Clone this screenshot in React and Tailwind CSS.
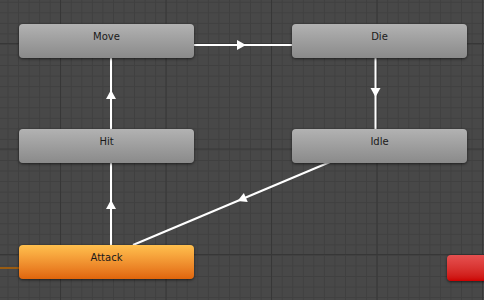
import React from 'react'

const nodes = [
  { name: 'Move', x: 19, y: 24, kind: 'gray' },
  { name: 'Die', x: 292, y: 24, kind: 'gray' },
  { name: 'Hit', x: 19, y: 129, kind: 'gray' },
  { name: 'Idle', x: 292, y: 129, kind: 'gray' },
  { name: 'Attack', x: 19, y: 245, kind: 'orange' },
]

const kindClass = {
  gray: 'bg-gradient-to-b from-[#b2b2b2] to-[#8a8a8a]',
  orange: 'bg-gradient-to-b from-[#ffc04e] to-[#e0650a]',
}

// triangle arrow head: tip point + direction
function Head({ tx, ty, dx, dy }) {
  const len = Math.hypot(dx, dy)
  const ux = dx / len
  const uy = dy / len
  const bx = tx - ux * 9
  const by = ty - uy * 9
  const px = -uy * 5
  const py = ux * 5
  return <polygon points={`${tx},${ty} ${bx + px},${by + py} ${bx - px},${by - py}`} fill="#ffffff" />
}

function Node({ name, x, y, kind }) {
  return (
    <div
      className={`absolute w-[175px] h-[34px] rounded-[4px] shadow-[0_1px_3px_rgba(0,0,0,0.6)] flex justify-center pt-[7px] ${kindClass[kind]}`}
      style={{ left: x, top: y }}
    >
      <span className="font-['DejaVu_Sans',sans-serif] text-[10px] leading-[12px] text-[#1a1a1a]">{name}</span>
    </div>
  )
}

export default function App() {
  return (
    <div className="relative w-[484px] h-[300px] overflow-hidden bg-[#484848] bg-[linear-gradient(90deg,#373737_1px,transparent_1px),linear-gradient(#373737_1px,transparent_1px),linear-gradient(90deg,#404040_1px,transparent_1px),linear-gradient(#404040_1px,transparent_1px)] bg-[size:105.5px_105.5px,105.5px_105.5px,10.55px_10.55px,10.55px_10.55px] bg-[position:60px_43px,60px_43px,7.5px_1.8px,7.5px_1.8px]">
      {/* transitions */}
      <svg className="absolute inset-0" width="484" height="300">
        <line x1="0" y1="268" x2="19" y2="268" stroke="#9a5c12" strokeWidth="2" />
        <line x1="193" y1="45" x2="292" y2="45" stroke="#fff" strokeWidth="2" />
        <Head tx={246} ty={45} dx={1} dy={0} />
        <line x1="375.5" y1="57" x2="375.5" y2="129" stroke="#fff" strokeWidth="2" />
        <Head tx={375.5} ty={97} dx={0} dy={1} />
        <line x1="111" y1="57" x2="111" y2="129" stroke="#fff" strokeWidth="2" />
        <Head tx={111} ty={90} dx={0} dy={-1} />
        <line x1="111" y1="162" x2="111" y2="245" stroke="#fff" strokeWidth="2" />
        <Head tx={111} ty={200} dx={0} dy={-1} />
        <line x1="330" y1="162" x2="133" y2="245" stroke="#fff" strokeWidth="2" />
        <Head tx={237.5} ty={201} dx={-197} dy={83} />
      </svg>

      {nodes.map((n) => (
        <Node key={n.name} {...n} />
      ))}

      {/* exit node, cut off at the edge */}
      <div className="absolute left-[447px] top-[255px] w-[60px] h-[26px] rounded-[4px] bg-gradient-to-b from-[#e65050] to-[#cc0000] shadow-[0_1px_3px_rgba(0,0,0,0.6)]" />
    </div>
  )
}
